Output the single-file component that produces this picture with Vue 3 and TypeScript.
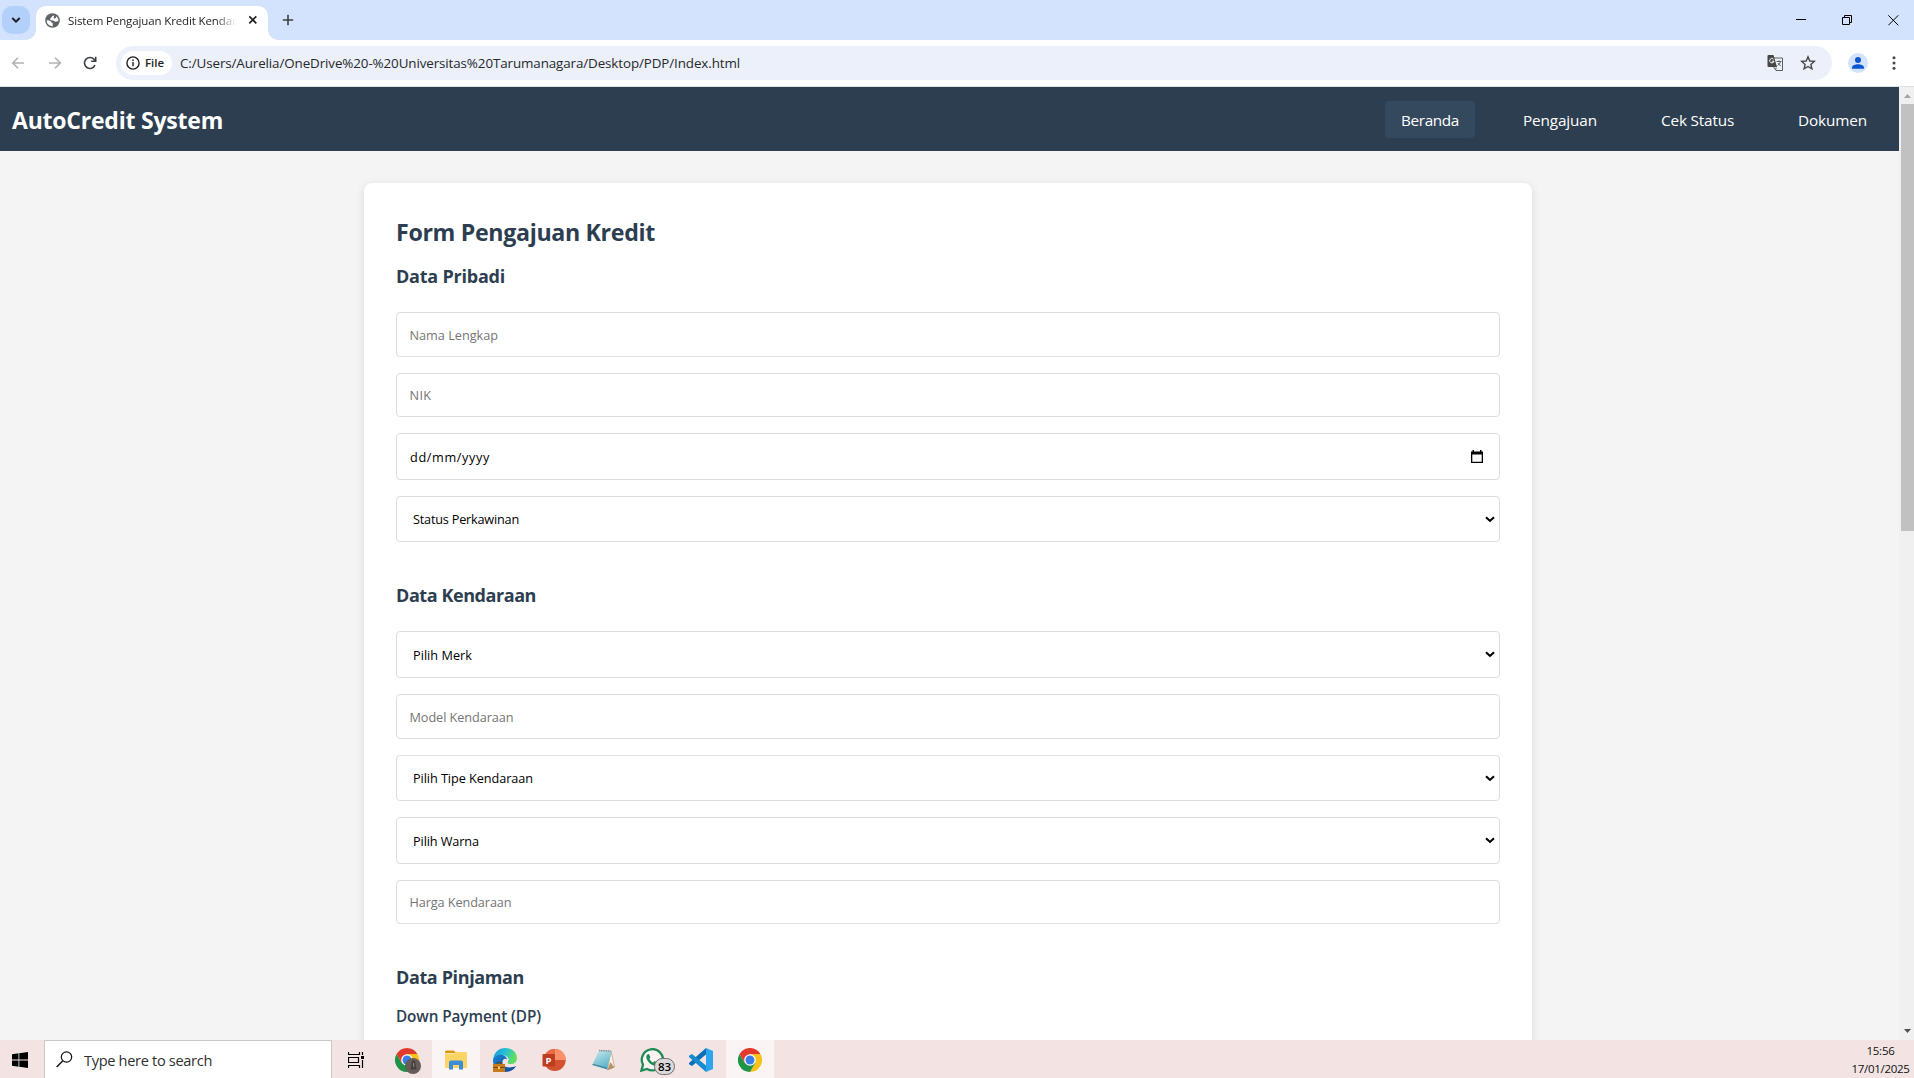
<script setup lang="ts">
import { ref } from 'vue'

interface Field {
  label: string
  kind: 'text' | 'date' | 'select'
  height: number
  width: number
}
interface Section {
  title: string
  width: number
  cls: string
  fields: Field[]
}

const nav = [
  { label: 'Beranda', width: 58 },
  { label: 'Pengajuan', width: 74 },
  { label: 'Cek Status', width: 73 },
  { label: 'Dokumen', width: 69 },
]
const active = ref('Beranda')

const sections: Section[] = [
  {
    title: 'Data Pribadi',
    width: 109,
    cls: 'first',
    fields: [
      { label: 'Nama Lengkap', kind: 'text', height: 45, width: 88.5 },
      { label: 'NIK', kind: 'text', height: 44, width: 22 },
      { label: 'dd/mm/yyyy', kind: 'date', height: 47, width: 80 },
      { label: 'Status Perkawinan', kind: 'select', height: 46, width: 106 },
    ],
  },
  {
    title: 'Data Kendaraan',
    width: 140,
    cls: 'second',
    fields: [
      { label: 'Pilih Merk', kind: 'select', height: 47, width: 59 },
      { label: 'Model Kendaraan', kind: 'text', height: 45, width: 104 },
      { label: 'Pilih Tipe Kendaraan', kind: 'select', height: 46, width: 120 },
      { label: 'Pilih Warna', kind: 'select', height: 47, width: 66 },
      { label: 'Harga Kendaraan', kind: 'text', height: 44, width: 102 },
    ],
  },
]

// Spreads the letters of a label so that it takes the given width in any installed font.
const vFit = {
  mounted(el: HTMLElement, binding: { value: number }) {
    const count = (el.textContent ?? '').trim().length
    const natural = el.getBoundingClientRect().width
    el.style.letterSpacing = `${(binding.value - natural) / count}px`
  },
}
</script>

<template>
  <div class="screen">
    <div class="tabstrip">
      <div class="tabsearch">
        <svg width="10" height="8" viewBox="0 0 10 8"><path d="M1.300 2l3.700 3.700L8.700 2" fill="none" stroke="#1f1f1f" stroke-width="2" /></svg>
      </div>
      <div class="tab">
        <svg class="globe" width="15" height="15" viewBox="0 0 15 15">
          <circle cx="7.500" cy="7.500" r="7.300" fill="#5f6368" />
          <path d="M1.600 7.300c1.700 0 3 .2 3.800.8.800.6.700 1.500 1.700 1.700.5.200.7.500.6 1.300v2.100A5.800 5.800 0 0 1 1.600 7.300zM9.300 1.900c-.3.900-1.600.9-2.200 1.400-.7.500-.4 1.300-1.200 1.700-.7.500-1 1.200-.4 1.900.8.900 3.200.3 4.200 1.300.5.600 1.300.7 1.700.3.500-.4 1-.4 1.900-.2A5.900 5.900 0 0 0 11.500 3.300c-.3 1.200-.7 2.200-1.800 2.200-.9 0-1.200-.7-.9-1.300.3-.7.400-1.500.5-2.300z" fill="#fff" />
        </svg>
        <div class="tabtitle"><span v-fit="188">Sistem Pengajuan Kredit Kendaraan</span></div>
        <svg class="tabclose" width="10" height="10" viewBox="0 0 10 10"><path d="M1.300 1.300l7 7m0-7l-7 7" stroke="#1f1f1f" stroke-width="1.700" /></svg>
      </div>
      <svg class="newtab" width="12" height="12" viewBox="0 0 12 12"><path d="M6 .8v10.400M.8 6h10.400" stroke="#3c3f43" stroke-width="1.600" /></svg>
      <div class="wincontrols">
        <svg width="11" height="11" viewBox="0 0 11 11"><path d="M0 4.500h10" stroke="#000" /></svg>
        <svg width="11" height="11" viewBox="0 0 11 11"><path d="M.5 2.500h7v7h-7zM2.500 2.500v-2h7v7h-2" fill="none" stroke="#000" /></svg>
        <svg width="11" height="11" viewBox="0 0 11 11"><path d="M.3.3l10 10m0-10l-10 10" stroke="#000" /></svg>
      </div>
    </div>

    <div class="toolbar">
      <svg class="back" width="14" height="14" viewBox="0 0 14 14"><path d="M13 7H2M7 1.700L1.700 7 7 12.300" fill="none" stroke="#b1b2b4" stroke-width="1.600" /></svg>
      <svg class="forward" width="14" height="14" viewBox="0 0 14 14"><path d="M1 7h11M7 1.700L12.300 7 7 12.300" fill="none" stroke="#b1b2b4" stroke-width="1.600" /></svg>
      <svg class="reload" width="14" height="14" viewBox="0 0 14 14"><path d="M12 9.200A5.500 5.500 0 1 1 11.500 3.800L12.600 5M12.700.8v4.500H8.200" fill="none" stroke="#3c3f43" stroke-width="1.600" /></svg>
      <div class="omnibox">
        <div class="chip">
          <svg width="14" height="14" viewBox="0 0 14 14"><circle cx="7" cy="7" r="6.100" fill="none" stroke="#1f1f1f" stroke-width="1.400" /><path d="M7 6v4.300M7 3.500v1.400" stroke="#1f1f1f" stroke-width="1.400" /></svg>
          <span v-fit="19">File</span>
        </div>
        <div class="url"><span v-fit="560">C:/Users/Aurelia/OneDrive%20-%20Universitas%20Tarumanagara/Desktop/PDP/Index.html</span></div>
        <svg class="translate" width="17" height="18" viewBox="0 0 17 18">
          <path d="M6 4h9.500v12.500H9L6 12" fill="#eef1fa" stroke="#5c5e61" />
          <path d="M1.500 1h5l3.500 12H1.500A1 1 0 0 1 .5 12V2a1 1 0 0 1 1-1z" fill="#474747" />
          <path d="M6.500 5.200A2.200 2.200 0 1 0 7 7.200H4.900" fill="none" stroke="#fff" />
          <path d="M9.500 7.500h5M12 6.300v1.200M13.500 7.600c-.5 2-1.700 3-3 4M10.800 9l3 3.200M9.300 13.500L8.500 16" fill="none" stroke="#5c5e61" />
        </svg>
        <svg class="star" width="16" height="16" viewBox="0 0 16 16"><path d="M8 1.800l1.800 4.200 4.500.4-3.400 3 1 4.400L8 11.500l-3.900 2.300 1-4.400-3.400-3 4.500-.4z" fill="none" stroke="#474747" stroke-width="1.400" /></svg>
      </div>
      <svg class="profile" width="20" height="20" viewBox="0 0 20 20"><circle cx="10" cy="10" r="10" fill="#d3e3fd" /><circle cx="10" cy="7" r="3" fill="#0b57d0" /><path d="M4 15.800v-1.300c0-2.200 3.500-3.300 6-3.300s6 1.100 6 3.300v1.300z" fill="#0b57d0" /></svg>
      <svg class="menu" width="4" height="14" viewBox="0 0 4 14"><g fill="#474747"><circle cx="2" cy="1.700" r="1.500" /><circle cx="2" cy="7" r="1.500" /><circle cx="2" cy="12.300" r="1.500" /></g></svg>
    </div>

    <div class="viewport">
      <div class="page">
        <header class="header">
          <div class="brand"><span v-fit="211">AutoCredit System</span></div>
          <nav>
            <a v-for="item in nav" :key="item.label" :class="{ active: active === item.label }" :style="{ width: item.width + 'px' }" @click="active = item.label"><span v-fit="item.width">{{ item.label }}</span></a>
          </nav>
        </header>
        <main class="card">
          <h2><span v-fit="259">Form Pengajuan Kredit</span></h2>
          <section v-for="s in sections" :key="s.title" :class="s.cls">
            <h3><span v-fit="s.width">{{ s.title }}</span></h3>
            <div class="fields">
              <div v-for="f in s.fields" :key="f.label" class="field" :class="f.kind" :style="{ height: f.height + 'px' }">
                <span v-fit="f.width">{{ f.label }}</span>
                <svg v-if="f.kind === 'date'" width="12" height="13" viewBox="0 0 12 13"><path d="M0 1.500h1.500V0h1.500v1.500h6V0h1.500v1.500H12V13H0zM1.300 4.500v7.200h9.400V4.500z" fill="#000" fill-rule="evenodd" /></svg>
                <svg v-if="f.kind === 'select'" width="10" height="7" viewBox="0 0 10 7"><path d="M1 1.200l4 3.700 4-3.700" fill="none" stroke="#000" stroke-width="2.100" /></svg>
              </div>
            </div>
          </section>
          <section class="loan">
            <h3><span v-fit="128">Data Pinjaman</span></h3>
            <h4><span v-fit="145">Down Payment (DP)</span></h4>
          </section>
        </main>
      </div>
      <div class="scrollbar">
        <svg width="7" height="4" viewBox="0 0 7 4"><path d="M0 4L3.500 0 7 4z" fill="#a3a3a3" /></svg>
        <div class="thumb"></div>
        <svg class="down" width="7" height="4" viewBox="0 0 7 4"><path d="M0 0h7L3.500 4z" fill="#505050" /></svg>
      </div>
    </div>

    <footer class="taskbar">
      <div class="start">
        <svg width="16" height="16" viewBox="0 0 16 16"><path d="M0 2.200L6.500 1.300V7.500H0zM7.300 1.200L16 0v7.500H7.300zM0 8.400h6.500v6.300L0 13.800zM7.300 8.400H16V16l-8.700-1.200z" fill="#000" /></svg>
      </div>
      <div class="search">
        <svg width="17" height="17" viewBox="0 0 17 17"><circle cx="10.500" cy="6" r="5.200" fill="none" stroke="#111" stroke-width="1.200" /><path d="M6.600 9.900L.6 16" stroke="#111" stroke-width="1.400" /></svg>
        <span v-fit="128">Type here to search</span>
      </div>
      <div class="taskview">
        <svg width="17" height="16" viewBox="0 0 17 16"><path d="M.5 0v2.500h11V0M.5 16v-2.500h11V16M.5 5.500h10v5H.5zM14.500 0v3M14.500 8v8" fill="none" stroke="#000" stroke-width="1.200" /><path d="M13 4h3v3h-3z" /></svg>
      </div>
      <div class="app">
        <svg width="28" height="28" viewBox="-2 -2 28 28">
          <path d="M12 6h10.400A12 12 0 0 1 12 24l5.200-9z" fill="#fbc116" /><path d="M1.600 6A12 12 0 0 0 12 24l5.200-9H6.800z" fill="#1e9447" /><path d="M12 6h10.400A12 12 0 0 0 1.600 6l5.200 9z" fill="#e23b2e" />
          <circle cx="12" cy="12" r="5.800" fill="#fff" /><circle cx="12" cy="12" r="4.500" fill="#397de9" />
          <circle cx="18" cy="18" r="8" fill="#665c58" /><path d="M17 12.500h3l1.500 9h-6z" fill="#45403e" /><path d="M18 15h1.200v4H18z" fill="#8a817c" />
        </svg>
      </div>
      <div class="app lit">
        <svg width="24" height="24" viewBox="0 0 24 24"><path d="M1 4a1.500 1.500 0 0 1 1.500-1.500H10L12 5H1z" fill="#d9980f" /><path d="M1 5.500h9L12 4h10a1 1 0 0 1 1 1v15H1z" fill="#fdd567" /><path d="M5 21.500v-7A2 2 0 0 1 7 12.500h10a2 2 0 0 1 2 2v7h-4V17H9v4.500z" fill="#3b8ed6" /></svg>
      </div>
      <div class="app">
        <svg width="24" height="24" viewBox="0 0 24 24">
          <defs>
            <linearGradient id="edgeTop" x1="0" y1="0" x2="1" y2=".4"><stop offset="0" stop-color="#1593d8" /><stop offset=".5" stop-color="#24bfd5" /><stop offset="1" stop-color="#62df5f" /></linearGradient>
            <linearGradient id="edgeLow" x1="0" y1="0" x2="1" y2="1"><stop offset="0" stop-color="#1685d3" /><stop offset="1" stop-color="#12489a" /></linearGradient>
          </defs>
          <path d="M0 12C1 4 6 0 12 0c7 0 12 4.500 12 10 0 4-3 6-6 6-2.500 0-4-1-3-2.500 2-3-1-6-4.500-6C5 7.500 1 10 0 14z" fill="url(#edgeTop)" />
          <path d="M0 12c1.500-4 6-6 9.500-5 3 .8 4.500 2.800 4.500 4.500-2-2-5 0-4.500 3.500.5 4 6 6 13.500 3-2 4-6 6-11 6C4 24 0 19 0 12z" fill="url(#edgeLow)" />
          <path d="M0 16h12v8H0z" fill="#c77b18" /><path d="M4 16v-1.500h4.500V16" fill="none" stroke="#704000" /><path d="M0 19.500h12" stroke="#7c4808" /><path d="M5 18.500h2v2.500H5z" fill="#ffd063" />
        </svg>
      </div>
      <div class="app">
        <svg width="24" height="24" viewBox="0 0 24 24"><circle cx="12.700" cy="12" r="11" fill="#d35230" /><path d="M12.700 1A11 11 0 0 1 23.700 12h-11z" fill="#ff8f6b" /><path d="M12.700 1A11 11 0 0 0 1.700 12h11z" fill="#ed6c47" /><rect x=".5" y="6" width="12.500" height="12.500" rx="1" fill="#bd3d20" /><text x="3.600" y="15.600" font-family="Open Sans, sans-serif" font-weight="700" font-size="9.500" fill="#fff">P</text></svg>
      </div>
      <div class="app">
        <svg width="24" height="24" viewBox="0 0 24 24">
          <defs><linearGradient id="note" x1="0" y1="0" x2=".5" y2="1"><stop offset="0" stop-color="#c9eaf1" /><stop offset="1" stop-color="#5db2c8" /></linearGradient></defs>
          <path d="M20 3l3.500 16-7 3z" fill="#f8f5e8" stroke="#a78c68" stroke-width=".6" /><path d="M16.500 22l3-8 3.800 5.500z" fill="#b39266" /><path d="M8 2.500L20.500 3 16 21.500 1.300 17z" fill="url(#note)" /><path d="M1.300 17L16 21l.300-1.500L2 15.700z" fill="#468ea3" /><path d="M8.300 2.500L20 3" stroke="#777" stroke-width="1.300" stroke-dasharray="1 .7" />
        </svg>
      </div>
      <div class="app whatsapp">
        <svg width="24" height="24" viewBox="0 0 24 24"><path d="M1.400 22.600L3 16.700A10.600 10.600 0 1 1 7 20.900z" fill="#f9f3f2" stroke="#1f8a55" stroke-width="2.300" /><path d="M7.300 6.500l1.600-.5 1.500 3.500-1 1.200c.8 1.800 2 3 3.900 3.900l1.300-1.500 3.200 1.600c.2 2.200-1.600 3.200-3.200 3C10.500 17 6.500 12.800 6.300 9c0-1 .4-1.900 1-2.500z" fill="#1f8a55" /></svg>
        <b class="badge">83</b>
      </div>
      <div class="app">
        <svg width="24" height="24" viewBox="0 0 24 24"><path d="M17 0v6.500L3 18 0 16.200V15z" fill="#0c70b8" /><path d="M17 24v-6.500L3 6 0 7.800V9z" fill="#168bd2" /><path d="M17 0l7 3v18l-7 3z" fill="#2ca5ee" /></svg>
      </div>
      <div class="app lit">
        <svg width="24" height="24" viewBox="0 0 24 24"><path d="M12 6h10.400A12 12 0 0 1 12 24l5.200-9z" fill="#fbc116" /><path d="M1.600 6A12 12 0 0 0 12 24l5.200-9H6.800z" fill="#1e9447" /><path d="M12 6h10.400A12 12 0 0 0 1.600 6l5.200 9z" fill="#e23b2e" /><circle cx="12" cy="12" r="5.800" fill="#fff" /><circle cx="12" cy="12" r="4.500" fill="#397de9" /></svg>
      </div>
      <div class="clock">
        <div><span v-fit="28">15:56</span></div>
        <div><span v-fit="58">17/01/2025</span></div>
      </div>
    </footer>
  </div>
</template>

<style>
body { margin: 0; overflow: hidden; }
</style>

<style scoped>
* { box-sizing: border-box; }
svg { display: block; flex: none; }
span { white-space: nowrap; }
.screen { width: 1914px; height: 1078px; display: flex; flex-direction: column; overflow: hidden; font-family: "Open Sans", "Noto Sans", sans-serif; background: #fff; }

.tabstrip { height: 40px; flex: none; display: flex; background: #d3e3fd; }
.tabsearch { width: 28px; height: 28px; margin: 6px 0 0 2px; border-radius: 10px; background: #b3d0fb; display: flex; align-items: center; justify-content: center; }
.tab { position: relative; width: 232px; height: 34px; margin: 6px 0 0 6px; padding: 0 12px 6px 9px; border-radius: 10px 10px 0 0; background: #fff; display: flex; align-items: center; }
.tab::before, .tab::after { content: ""; position: absolute; bottom: 0; width: 10px; height: 10px; }
.tab::before { left: -10px; background: radial-gradient(circle at 0 0, transparent 9.5px, #fff 10px); }
.tab::after { right: -10px; background: radial-gradient(circle at 100% 0, transparent 9.5px, #fff 10px); }
.tabtitle { width: 168px; flex: none; margin-left: 8px; font-size: 11.5px; line-height: 20px; color: #1f1f1f; overflow: hidden; padding-top: 1px; -webkit-mask-image: linear-gradient(90deg, #000 148px, transparent 168px); mask-image: linear-gradient(90deg, #000 148px, transparent 168px); }
.tabclose { margin-left: 12px; }
.newtab { margin: 14px 0 0 14px; }
.wincontrols { display: flex; gap: 35px; margin: 15px 15px 0 auto; }

.toolbar { height: 47px; flex: none; display: flex; align-items: center; padding: 0 0 1px 11px; border-bottom: 1px solid #dcdfe3; }
.forward { margin-left: 23px; }
.reload { margin-left: 21px; }
.omnibox { width: 1716px; height: 34px; margin-left: 19px; padding: 0 16px 0 5px; border-radius: 17px; background: #ecf0fa; display: flex; align-items: center; }
.chip { width: 51px; height: 24px; padding-left: 5px; border-radius: 12px; background: #fff; display: flex; align-items: center; gap: 5px; font-size: 11.5px; font-weight: 600; color: #1f1f1f; }
.url { margin-left: 8px; font-size: 13.4px; line-height: 20px; color: #27292c; }
.translate { margin-left: auto; }
.star { margin-left: 16px; }
.profile { margin-left: 16px; }
.menu { margin-left: 24px; }

.viewport { height: 953px; flex: none; display: flex; overflow: hidden; }
.page { width: 1899px; height: 953px; background: #f4f4f4; overflow: hidden; }
.header { height: 64px; display: flex; justify-content: space-between; align-items: center; padding: 0 16px 0 12px; background: #2c3e50; color: #fff; }
.brand { font-size: 23px; font-weight: 700; line-height: 30px; padding-top: 2px; }
nav { display: flex; gap: 32px; }
nav a { box-sizing: content-box; height: 37px; line-height: 38.500px; padding: 0 16px; border-radius: 4px; font-size: 15.3px; color: #fff; cursor: pointer; }
nav a.active { background: #34495e; }
.card { width: 1168px; height: 1400px; margin: 32px 0 0 364px; padding: 32px; border-radius: 8px; background: #fff; box-shadow: 0 2px 10px rgba(0, 0, 0, .1); color: #2c3e50; }
h2, h3, h4 { margin: 0; }
h2 { height: 34px; line-height: 34px; font-size: 23.2px; font-weight: 700; }
h3 { height: 26px; line-height: 26px; font-size: 18px; font-weight: 700; }
h4 { height: 24px; line-height: 24px; font-size: 15.3px; font-weight: 600; }
.first { padding-top: 14px; }
.second { padding-top: 40px; }
.loan { padding-top: 40px; }
.fields { display: flex; flex-direction: column; gap: 16px; padding-top: 23px; }
.loan h4 { margin-top: 14px; }
.field { display: flex; align-items: center; justify-content: space-between; border: 1px solid #ddd; border-radius: 4px; background: #fff; font-size: 12.7px; line-height: 18px; color: #000; }
.text { padding: 0 12px 0 12.500px; color: #757575; }
.date { padding: 0 16px 0 13px; }
.select { padding: 0 4px 0 16px; }

.scrollbar { width: 15px; height: 953px; background: #f0f0f0; padding: 7px 0 0 2px; display: flex; flex-direction: column; }
.scrollbar svg { margin-left: 3px; }
.thumb { width: 13px; height: 427px; margin-top: 6px; background: #c1c1c1; }
.scrollbar .down { margin: auto 0 7px 3px; }

.taskbar { height: 38px; flex: none; display: flex; background: #f3e4e3; }
.start { width: 44px; padding: 12px 0 0 12px; }
.search { width: 288px; height: 38px; border: 1px solid #c9c6c6; border-bottom: 0; background: #fff; padding: 0 0 0 11px; display: flex; align-items: center; font-size: 14.6px; color: #2f2f2f; }
.search span { margin-left: 11px; padding-top: 1px; }
.search svg { margin-top: -1px; }
.taskview { width: 51px; padding: 12px 0 0 16px; }
.app { position: relative; width: 48px; height: 38px; margin-right: 1px; display: flex; justify-content: center; align-items: center; padding-top: 2px; }
.app.lit { background: #fbf4f4; }
.badge { position: absolute; left: 26px; top: 18px; width: 21px; height: 17px; border: 1px solid #6e6e6e; border-radius: 9px; background: #dcd9d9; font: 600 11.5px/15px "Open Sans", sans-serif; text-align: center; color: #000; }
.clock { width: 67px; margin-left: auto; padding: 2px 0 0; display: flex; flex-direction: column; align-items: center; font-size: 11.5px; line-height: 18px; color: #111; }
</style>
